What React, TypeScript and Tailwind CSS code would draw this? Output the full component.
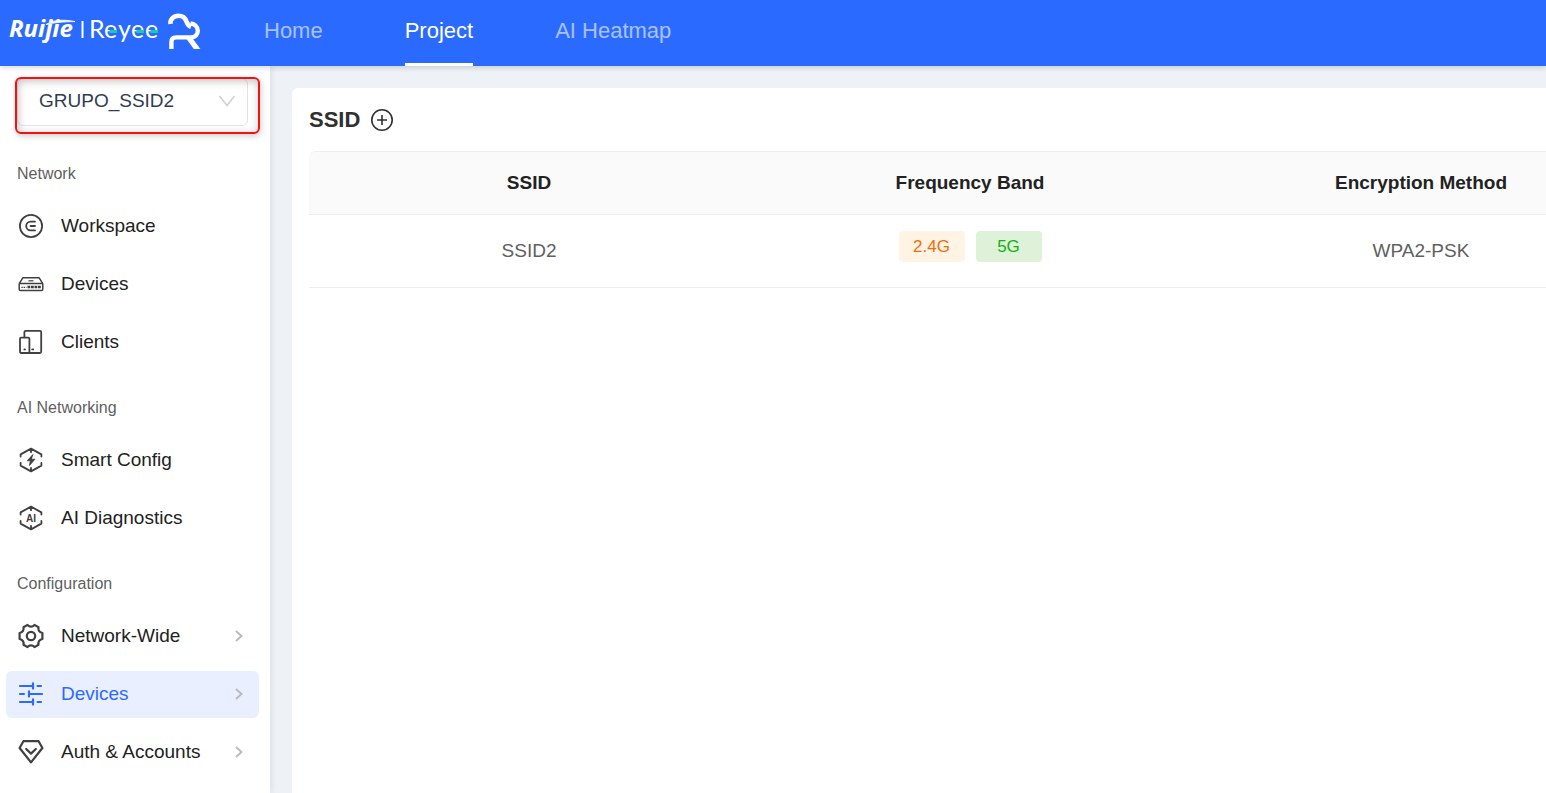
import React from 'react';

interface NavItem {
    label: string;
    icon: React.ComponentType;
    active?: boolean;
    expandable?: boolean;
}

interface NavSection {
    title: string;
    items: NavItem[];
}

function Icon({ children }: { children: React.ReactNode }) {
    return (
        <svg
            className="size-[26px] shrink-0"
            viewBox="0 0 26 26"
            fill="none"
            stroke="currentColor"
            strokeWidth="1.8"
            strokeLinecap="round"
            strokeLinejoin="round"
            aria-hidden="true"
        >
            {children}
        </svg>
    );
}

const WorkspaceIcon = () => (
    <Icon>
        <circle cx="13" cy="13" r="11.1" />
        <path d="M17 8.6h-4.4a4.4 4.4 0 0 0 0 8.8H17M12.6 13H17" />
    </Icon>
);

const RouterIcon = () => (
    <Icon>
        <path
            strokeWidth="1.5"
            d="M1.4 12.4 4.8 6.8h16.4l3.4 5.6M2 12.4h22a.8.8 0 0 1 .8.8v5a1.3 1.3 0 0 1-1.3 1.300h-21a1.3 1.3 0 0 1-1.300-1.300v-5a.8.8 0 0 1 .8-.8z"
        />
        <path strokeWidth="1.2" strokeLinecap="butt" d="M10.5 9.800h5" />
        <path strokeWidth="2.600" strokeLinecap="butt" strokeDasharray="2.800 0.700" d="M9.500 16h13.500" />
        <path strokeWidth="1.400" strokeLinecap="butt" strokeDasharray="1.400 0.800" d="M3.400 16.400h5" />
    </Icon>
);

const ClientsIcon = () => (
    <Icon>
        <path d="M6.400 8.400V3.200a1.400 1.400 0 0 1 1.400-1.400h14a1.400 1.400 0 0 1 1.400 1.400v19.400a1.400 1.400 0 0 1-1.400 1.400H3.200a1.200 1.200 0 0 1-1.200-1.200V9.800a1.200 1.200 0 0 1 1.200-1.200h7a1.200 1.200 0 0 1 1.200 1.200V24" />
        <path d="M6.400 20.400h.6M14.200 20.400h1" />
    </Icon>
);

const HexFrame = () => (
    <path d="M2.600 9.600V7.400L13 1.600l10.400 5.800v2.200M2.600 16v2.600L13 24.400l10.400-5.800V16M13 1.600v3.600M13 24.400v-3.600" />
);

const SmartIcon = () => (
    <Icon>
        <HexFrame />
        <path fill="currentColor" strokeWidth="0.8" d="M14.600 7.800 9.200 13.800h3.200l-1 4.800 5.600-6.400h-3.400z" />
    </Icon>
);

const DiagnosticsIcon = () => (
    <Icon>
        <HexFrame />
        <text x="13" y="16.600" textAnchor="middle" fontSize="10" fontWeight="bold" fill="currentColor" stroke="none">
            AI
        </text>
    </Icon>
);

const GearIcon = () => (
    <Icon>
        <path
            strokeWidth="2.200"
            d="M9.500 1.900c1.100 1.200 2.200 1.700 3.500 1.700s2.400-.5 3.500-1.700l4 2.300c-.3 1.500-.1 2.700.5 3.700s1.700 1.700 3.400 2.100v6c-1.700.4-2.800 1.100-3.400 2.100s-.8 2.200-.5 3.700l-4 2.300c-1.100-1.200-2.200-1.700-3.500-1.700s-2.400.5-3.500 1.700l-4-2.300c.3-1.500.1-2.700-.5-3.700S3.300 16.400 1.600 16v-6C3.300 9.600 4.400 8.900 5 7.900s.8-2.200.5-3.700z"
        />
        <circle cx="13" cy="13" r="4.200" strokeWidth="2.200" />
    </Icon>
);

const SlidersIcon = () => (
    <Icon>
        <path strokeWidth="2.200" d="M2 5h12.500M19.500 5H23M2 13h4M11.500 13H24M2 21h12.500M19.500 21H23M15 2.400v5.200M11 10.400v5.200M15 18.400v5.200" />
    </Icon>
);

const AccountsIcon = () => (
    <Icon>
        <path strokeWidth="2.200" d="M5.400 2.200h15.200l3.800 6.800L13 23.400 1.600 9z" />
        <path strokeWidth="2.200" d="m8.200 10 4.800 4.600 4.800-4.600" />
    </Icon>
);

const SECTIONS: NavSection[] = [
    {
        title: 'Network',
        items: [
            { label: 'Workspace', icon: WorkspaceIcon },
            { label: 'Devices', icon: RouterIcon },
            { label: 'Clients', icon: ClientsIcon },
        ],
    },
    {
        title: 'AI Networking',
        items: [
            { label: 'Smart Config', icon: SmartIcon },
            { label: 'AI Diagnostics', icon: DiagnosticsIcon },
        ],
    },
    {
        title: 'Configuration',
        items: [
            { label: 'Network-Wide', icon: GearIcon, expandable: true },
            { label: 'Devices', icon: SlidersIcon, expandable: true, active: true },
            { label: 'Auth & Accounts', icon: AccountsIcon, expandable: true },
        ],
    },
];

const TABS = [
    { label: 'Home', active: false },
    { label: 'Project', active: true },
    { label: 'AI Heatmap', active: false },
];

function Logo() {
    return (
        <svg className="h-[66px] w-[210px] shrink-0" viewBox="0 0 210 66" fill="none" role="img" aria-label="Ruijie Reyee">
            <text x="9" y="37" fontFamily="Open Sans, sans-serif" fontSize="24" fontWeight="700" fontStyle="italic" fill="#fff">
                Ruijie
            </text>
            {/* Swoosh over the wordmark */}
            <path d="M46 24.500C52 20.500 62 18.800 75 21.600 63 21.600 54 22.800 46 24.500z" fill="#fff" stroke="#fff" strokeWidth="0.800" />
            <path d="M82.500 21v17" stroke="#fff" strokeWidth="2" />
            <text x="89 104 118 131 145" y="38" fontFamily="Lato, sans-serif" fontSize="25" fill="#fff">
                Reyee
            </text>
            <path d="M109.500 31.500h7.500M136.500 31.500h7.500M150.500 31.500h7.500" stroke="#12cfa8" strokeWidth="3" />
            {/* Cloud mark */}
            <path
                d="M170.500 24c-.6-4.600 3.200-8.200 8-8.200 4 0 6.800 2.400 8 5.800 1 2.600 2.400 4.400 4.500 5.200"
                stroke="#fff"
                strokeWidth="4.600"
            />
            <path
                d="M190.500 23.500c4.200.2 7.300 3.300 7.300 7.300 0 3.800-3 6.600-7 6.600h-14.600c-3.200 0-4.800 1.600-4.800 4.600v7"
                stroke="#fff"
                strokeWidth="4.400"
            />
            <path d="M186.500 39h6.500l7.400 10h-6.600z" fill="#fff" />
        </svg>
    );
}

function Header() {
    return (
        <header className="relative z-20 flex h-[66px] bg-[#2b6aff] shadow-[0_1px_6px_rgba(0,21,41,0.2)]">
            <Logo />
            <nav className="ml-[54px] flex gap-[82px] text-[22px]">
                {TABS.map((tab) => (
                    <a
                        key={tab.label}
                        href="#"
                        className={`border-b-3 pt-[15px] leading-8 ${
                            tab.active ? 'border-white text-white' : 'border-transparent text-white/60'
                        }`}
                    >
                        {tab.label}
                    </a>
                ))}
            </nav>
        </header>
    );
}

function ProjectSelect() {
    return (
        <div className="relative mt-3 mr-[22px] ml-[17px]">
            <select
                aria-label="Project"
                className="h-12 w-full appearance-none rounded-md border border-[#e2e4e8] bg-white pb-[2px] pl-[21px] text-[19px] text-[#303d4f]"
            >
                <option>GRUPO_SSID2</option>
            </select>
            <svg
                className="pointer-events-none absolute top-[17px] right-3 h-3 w-[18px] text-[#cfcfcf]"
                viewBox="0 0 18 12"
                fill="none"
                stroke="currentColor"
                strokeWidth="1.500"
                aria-hidden="true"
            >
                <path d="m1.500 1 7.500 9.500L16.500 1" />
            </svg>
            {/* Highlight frame around the project selector */}
            <div className="pointer-events-none absolute -top-px -right-3 -bottom-2 -left-[2px] rounded-md border-2 border-[#f31212] shadow-[1px_2px_6px_rgba(0,0,0,0.2),inset_1px_2px_8px_rgba(0,0,0,0.25)]" />
        </div>
    );
}

function Sidebar() {
    return (
        <aside className="relative z-10 w-[270px] shrink-0 bg-white pb-[17px] shadow-[2px_0_6px_rgba(0,21,41,0.08)]">
            <ProjectSelect />
            <nav className="mt-9 flex flex-col gap-[30px] pr-[11px] pl-[6px]">
                {SECTIONS.map((section) => (
                    <section key={section.title}>
                        <h2 className="mb-[17px] pl-[11px] text-base leading-6 text-[#5f5f5f]">{section.title}</h2>
                        <ul className="flex flex-col gap-[11px]">
                            {section.items.map((item) => {
                                const ItemIcon = item.icon;
                                return (
                                    <li key={item.label}>
                                        <a
                                            href="#"
                                            className={`flex h-[47px] items-center gap-[17px] rounded-md pr-4 pb-px pl-3 text-[19px] leading-7 ${
                                                item.active ? 'bg-[#e9efff] text-[#2b6aff]' : 'text-[#404040]'
                                            }`}
                                        >
                                            <ItemIcon />
                                            <span className={`flex-1 ${item.active ? '' : 'text-[#222]'}`}>{item.label}</span>
                                            {item.expandable && (
                                                <svg
                                                    className="h-3 w-2 text-[#b8b8b8]"
                                                    viewBox="0 0 8 12"
                                                    fill="none"
                                                    stroke="currentColor"
                                                    strokeWidth="1.800"
                                                    aria-hidden="true"
                                                >
                                                    <path d="m1 1 5.500 5L1 11" />
                                                </svg>
                                            )}
                                        </a>
                                    </li>
                                );
                            })}
                        </ul>
                    </section>
                ))}
            </nav>
        </aside>
    );
}

function SsidTable() {
    return (
        <div className="overflow-hidden rounded-tl-md">
            {/* Wider than the panel, the remaining columns run off to the right */}
            <table className="w-full min-w-[1342px] table-fixed border-separate border-spacing-0 text-center text-[19px]">
                <colgroup>
                    <col className="w-[440px]" />
                    <col className="w-[442px]" />
                    <col />
                </colgroup>
                <thead>
                    <tr className="h-16 bg-[#fafafa] text-[#222]">
                        <th className="rounded-tl-md border-y border-[#eee] font-bold">SSID</th>
                        <th className="border-y border-[#eee] font-bold">Frequency Band</th>
                        <th className="border-y border-[#eee] font-bold">Encryption Method</th>
                    </tr>
                </thead>
                <tbody>
                    <tr className="h-[73px] text-[#606060]">
                        <td className="border-b border-[#eee]">SSID2</td>
                        <td className="border-b border-[#eee]">
                            <div className="flex justify-center gap-[11px] pb-[10px] text-[17px]">
                                <span className="h-[31px] w-[66px] rounded-sm bg-[#fff3e4] leading-[31px] text-[#f56c0a]">2.4G</span>
                                <span className="h-[31px] w-[66px] rounded-sm bg-[#ddf2d9] leading-[31px] text-[#10b010]">5G</span>
                            </div>
                        </td>
                        <td className="border-b border-[#eee]">WPA2-PSK</td>
                    </tr>
                </tbody>
            </table>
        </div>
    );
}

export default function App() {
    return (
        <div className="flex min-h-screen flex-col bg-[#eef2f6] font-['Liberation_Sans',Arial,sans-serif]">
            <Header />
            <div className="flex flex-1">
                <Sidebar />
                <main className="flex min-w-0 flex-1 pt-[22px] pl-[22px]">
                    <section className="min-w-0 flex-1 rounded-tl-md bg-white pt-4 pl-[17px]">
                        <div className="mb-[15px] flex items-center gap-[11px]">
                            <h1 className="text-[22px] leading-8 font-bold text-[#303030]">SSID</h1>
                            <button type="button" aria-label="Add SSID" className="text-[#303030]">
                                <svg className="size-[22px]" viewBox="0 0 22 22" fill="none" stroke="currentColor" strokeWidth="1.600">
                                    <circle cx="11" cy="11" r="10.200" />
                                    <path d="M11 6v10M6 11h10" />
                                </svg>
                            </button>
                        </div>
                        <SsidTable />
                    </section>
                </main>
            </div>
        </div>
    );
}
